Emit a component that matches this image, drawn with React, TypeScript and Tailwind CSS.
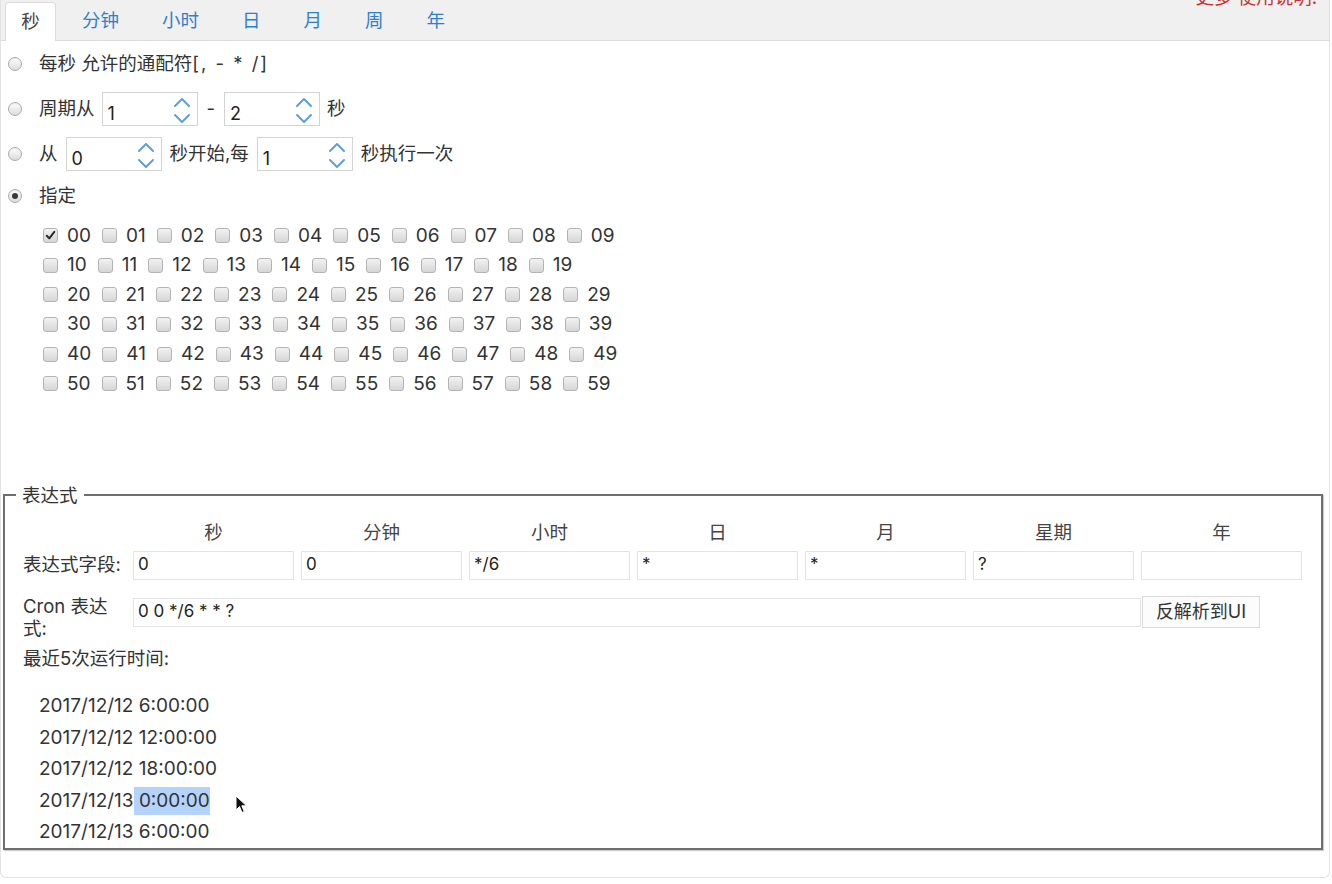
import React from "react";

const FONT = { fontFamily: '"Inter", "Noto Sans CJK SC", sans-serif' };

function Radio({ checked = false }: { checked?: boolean }) {
  return (
    <span className="flex h-[14px] w-[14px] shrink-0 items-center justify-center rounded-full border border-[#acacac] bg-gradient-to-b from-[#ffffff] to-[#dcdcdc] shadow-[inset_0_1px_1px_rgba(0,0,0,0.08)]">
      {checked && <span className="h-[6px] w-[6px] rounded-full bg-[#3a3a3a]" />}
    </span>
  );
}

function Checkbox({ checked = false }: { checked?: boolean }) {
  return (
    <span className="relative flex h-[15px] w-[15px] shrink-0 items-center justify-center rounded-[3px] border border-[#b4b4b4] bg-gradient-to-b from-[#f2f2f2] to-[#d6d6d6]">
      {checked && (
        <svg width="11" height="11" viewBox="0 0 11 11" className="absolute">
          <path d="M1.8 5.8 L4.3 8.4 L9.3 1.8" fill="none" stroke="#2a2a2a" strokeWidth="2" strokeLinecap="round" strokeLinejoin="round" />
        </svg>
      )}
    </span>
  );
}

function Spinner({ value }: { value: string }) {
  return (
    <span className="relative flex h-[34px] w-[96px] shrink-0 items-center border border-[#d4d4d4] bg-white pl-[5px] pt-[9px] text-[18px] text-[#222]">
      {value}
      <svg width="18" height="34" viewBox="0 0 18 34" className="absolute right-[6px] top-[-1px]">
        <path d="M2 14 L9 7 L16 14" fill="none" stroke="#5d9fdc" strokeWidth="2" strokeLinecap="round" strokeLinejoin="round" />
        <path d="M2 23 L9 30 L16 23" fill="none" stroke="#5d9fdc" strokeWidth="2" strokeLinecap="round" strokeLinejoin="round" />
      </svg>
    </span>
  );
}

function Field({ value, w = "w-[161px]" }: { value: string; w?: string }) {
  return (
    <span className={`flex h-[29px] ${w} shrink-0 items-center border border-[#e4e4e4] bg-white pl-[4px] text-[17px] text-[#222]`}>
      {value}
    </span>
  );
}

const tabs = ["秒", "分钟", "小时", "日", "月", "周", "年"];
const headers = ["秒", "分钟", "小时", "日", "月", "星期", "年"];
const fields = ["0", "0", "*/6", "*", "*", "?", ""];

export default function App() {
  const rows: number[][] = [];
  for (let r = 0; r < 6; r++) {
    const row: number[] = [];
    for (let c = 0; c < 10; c++) row.push(r * 10 + c);
    rows.push(row);
  }
  return (
    <div className="h-[884px] w-[1332px] bg-white text-[18.5px] text-[#333]" style={FONT}>
      <div className="h-[878px] w-[1330px] rounded-b-[6px] border-x border-b border-[#e2e2e2]">
        {/* tab bar */}
        <div className="relative flex h-[41px] items-end border-b border-[#dcdcdc] bg-[#f0f0f0] pl-[4px]">
          <span className="absolute right-[12px] top-[-16px] text-[18.5px] text-[#c9302c]">更多 使用说明!</span>
          {tabs.map((t, i) =>
            i === 0 ? (
              <div
                key={t}
                className="mb-[-1px] mr-[5px] flex h-[39px] w-[51px] items-center justify-center rounded-t-[4px] border-x border-t border-[#dcdcdc] bg-white text-[18.5px] text-[#444]"
              >
                {t}
              </div>
            ) : (
              <div key={t} className="mr-[1px] flex h-[39px] items-center px-[21px] text-[18.5px] text-[#2f80cc]">
                {t}
              </div>
            )
          )}
        </div>

        {/* options */}
        <div className="flex flex-col pt-[6px]">
          <div className="flex h-[34px] items-center pl-[7px]">
            <Radio />
            <span className="ml-[17px]">
              每秒 允许的通配符<span className="tracking-[2px]">[, - * /]</span>
            </span>
          </div>
          <div className="mt-[11px] flex h-[34px] items-center gap-[7px] pl-[7px]">
            <Radio />
            <span className="ml-[10px]">周期从</span>
            <Spinner value="1" />
            <span className="mx-[2px]">-</span>
            <Spinner value="2" />
            <span>秒</span>
          </div>
          <div className="mt-[11px] flex h-[34px] items-center gap-[8px] pl-[7px]">
            <Radio />
            <span className="ml-[9px]">从</span>
            <Spinner value="0" />
            <span>秒开始,每</span>
            <Spinner value="1" />
            <span>秒执行一次</span>
          </div>
          <div className="mt-[8px] flex h-[34px] items-center pl-[7px]">
            <Radio checked />
            <span className="ml-[17px]">指定</span>
          </div>
        </div>

        {/* checkbox grid */}
        <div className="mt-[8px] flex flex-col pl-[42px]">
          {rows.map((row, ri) => (
            <div key={ri} className="flex h-[29.6px] items-center">
              {row.map((n) => (
                <span key={n} className="flex items-center">
                  <Checkbox checked={n === 0} />
                  <span className="ml-[9px] mr-[11px] text-[19px] text-[#333]">{String(n).padStart(2, "0")}</span>
                </span>
              ))}
            </div>
          ))}
        </div>

        {/* expression fieldset */}
        <fieldset className="ml-[2px] mt-[85px] w-[1320px] border-2 border-[#6e6e6e] pl-[18px] shadow-[1px_1px_1px_rgba(0,0,0,0.2)]">
          <legend className="ml-[-7px] px-[6px] leading-[22px]">表达式</legend>
          <div className="mt-[16px] flex h-[22px] items-center gap-[7px] pl-[110px] text-[#444]">
            {headers.map((h) => (
              <span key={h} className="w-[161px] text-center">
                {h}
              </span>
            ))}
          </div>
          <div className="mt-[7px] flex h-[29px] items-center">
            <span className="w-[110px] shrink-0">表达式字段:</span>
            <div className="flex gap-[7px]">
              {fields.map((f, i) => (
                <Field key={i} value={f} />
              ))}
            </div>
          </div>
          <div className="mt-[15px] flex h-[44px] items-start">
            <span className="w-[110px] shrink-0 leading-[22px]">
              Cron 表达
              <br />
              式:
            </span>
            <span className="mt-[3px]">
              <Field value="0 0 */6 * * ?" w="w-[1008px]" />
            </span>
            <button className="ml-[1px] mt-[1px] flex h-[32px] w-[118px] items-center justify-center border border-[#dadada] bg-[#fcfcfc] text-[18px] text-[#333]">
              反解析到UI
            </button>
          </div>
          <div className="mt-[8px] flex h-[24px] items-center">最近5次运行时间:</div>
          <div className="relative mt-[20px] pl-[16px] text-[19px] text-[#333]">
            <div className="flex h-[31.5px] items-center">2017/12/12 6:00:00</div>
            <div className="flex h-[31.5px] items-center">2017/12/12 12:00:00</div>
            <div className="flex h-[31.5px] items-center">2017/12/12 18:00:00</div>
            <div className="flex h-[31.5px] items-center whitespace-pre">
              2017/12/13<span className="bg-[#b3d3fb]"> 0:00:00</span>
            </div>
            <div className="flex h-[31.5px] items-center">2017/12/13 6:00:00</div>
            <svg width="14" height="20" viewBox="0 0 14 20" className="absolute left-[212px] top-[104px]">
              <path d="M1 1 L1 15 L4.5 11.5 L7 17.5 L9.3 16.5 L6.8 10.8 L11.5 10.8 Z" fill="#111" stroke="#fff" strokeWidth="1" strokeLinejoin="round" />
            </svg>
          </div>
        </fieldset>
      </div>
    </div>
  );
}
